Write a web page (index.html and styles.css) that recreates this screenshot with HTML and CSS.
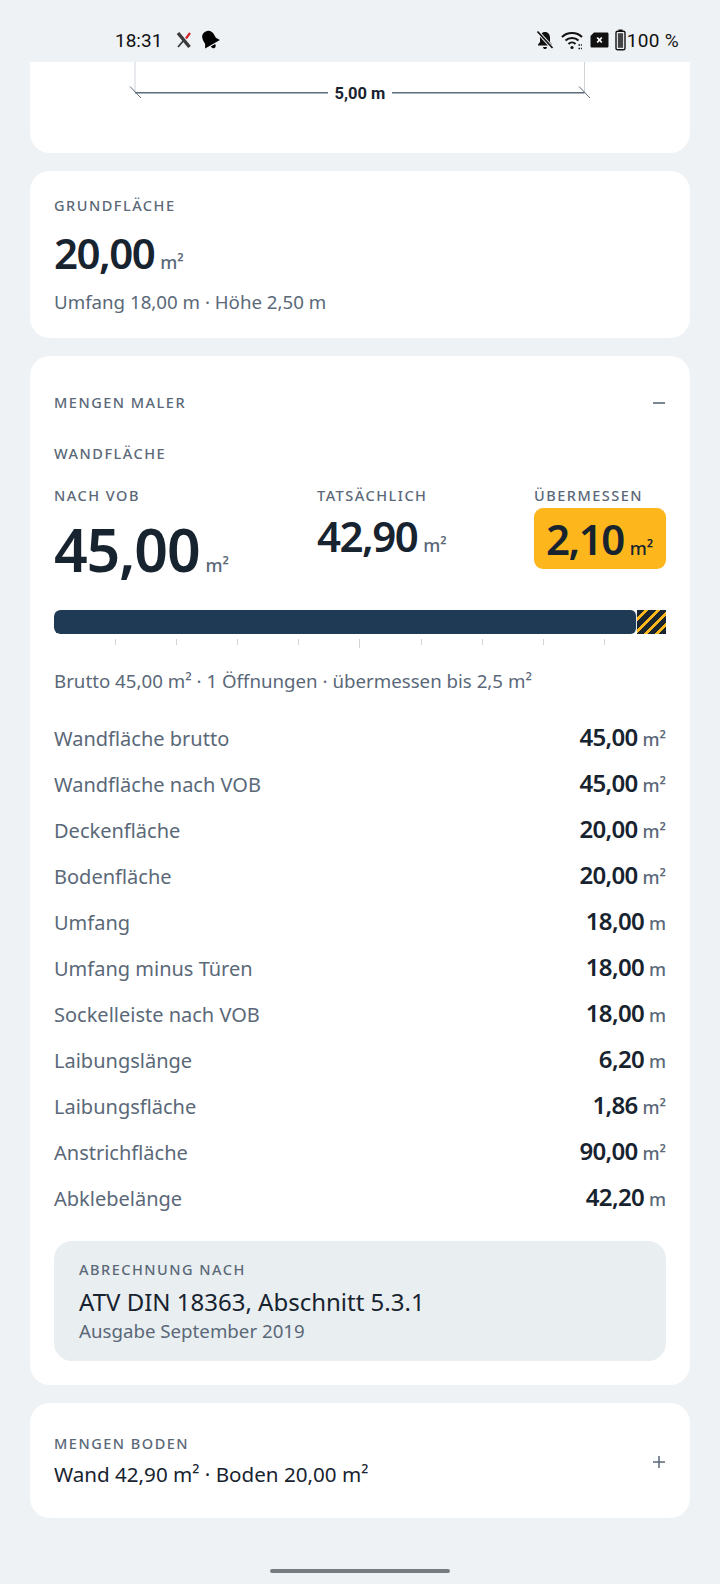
FILE: index.html
```html
<!DOCTYPE html>
<html lang="de">
<head>
  <meta charset="UTF-8">
  <title>Mengen</title>
  <link rel="stylesheet" href="styles.css">
</head>
<body>
  <div class="statusbar">
    <div class="status-left">
      <span class="time">18:31</span>
      <svg class="app-x" width="18" height="18" viewBox="0 0 18 18"><path d="M3 2 L14.5 16" stroke="#3a3a3a" stroke-width="3.4" fill="none"/><path d="M9 9 L3 16" stroke="#3a3a3a" stroke-width="1.8" fill="none"/><path d="M11 7.5 L15 2" stroke="#d2222a" stroke-width="2.2" fill="none"/></svg>
      <svg class="app-bell" width="20" height="20" viewBox="0 0 20 20"><g transform="rotate(-30 10 10)"><path d="M10 0.5 C5.5 0.5 3.8 4 3.8 7.5 V11 L1.5 15 H18.5 L16.2 11 V7.5 C16.2 4 14.5 0.5 10 0.5 Z" fill="#000"/><path d="M7.5 16 H12.5 C12.5 18 11.3 19.2 10 19.2 C8.7 19.2 7.5 18 7.5 16 Z" fill="#000"/></g></svg>
    </div>
    <div class="status-right">
      <svg class="icon-mute" width="18" height="20" viewBox="0 0 18 20"><path d="M9 2 C5.8 2 4 4.5 4 7.5 V12 L2 14.5 V15.5 H16 V14.5 L14 12 V7.5 C14 4.5 12.2 2 9 2 Z" fill="#111"/><path d="M7 17 H11 C11 18.4 10 19 9 19 C8 19 7 18.4 7 17 Z" fill="#111"/><path d="M1.5 1.5 L16.5 18" stroke="#eef2f5" stroke-width="3.4"/><path d="M1.5 1.5 L16.5 18" stroke="#111" stroke-width="1.7"/></svg>
      <svg width="23" height="20" viewBox="0 0 23 20" fill="none" stroke="#111" stroke-width="2"><path d="M1 7 C6 1.5 16 1.5 21 7"/><path d="M4.5 10.5 C8 7 14 7 17.5 10.5"/><path d="M7.5 14 C9.5 12 12.5 12 14.5 14"/><circle cx="11" cy="17.5" r="1.6" fill="#111" stroke="none"/><path d="M17.5 15 H21 M17.5 18.5 H21" stroke-width="1.6" stroke-dasharray="1.6 1"/></svg>
      <svg width="19" height="16" viewBox="0 0 19 16"><path d="M4 0.5 H17 C18 0.5 18.5 1 18.5 2 V14 C18.5 15 18 15.5 17 15.5 H2 C1 15.5 0.5 15 0.5 14 V4 Z" fill="#111"/><path d="M7.2 5.5 L11.8 10.5 M11.8 5.5 L7.2 10.5" stroke="#fff" stroke-width="1.8"/></svg>
      <svg width="11" height="22" viewBox="0 0 11 22"><rect x="3.5" y="0.5" width="4" height="2" fill="#111"/><rect x="1" y="2.2" width="9" height="18.6" rx="1.6" fill="none" stroke="#111" stroke-width="1.4"/><rect x="2.9" y="4.2" width="5.2" height="14.6" fill="#444"/></svg>
      <span class="battery-text">100 %</span>
    </div>
  </div>

  <main class="content">
    <section class="card card-plan">
      <svg class="plan" width="660" height="91" viewBox="0 0 660 91">
        <path d="M105 0 V31 M554.5 0 V31" stroke="#cfd4d9" stroke-width="1"/>
        <path d="M105 30.7 H298 M362 30.7 H554.5" stroke="#5d6b7b" stroke-width="1.6"/>
        <path d="M100 24.5 L111 36 M549 24.5 L560 36" stroke="#5d6b7b" stroke-width="1"/>
        <text x="330" y="37" text-anchor="middle" class="plan-label">5,00 m</text>
      </svg>
    </section>

    <section class="card card-base">
      <div class="label">GRUNDFLÄCHE</div>
      <div class="value-line base-value"><span class="num num-md">20,00</span><span class="unit">m²</span></div>
      <div class="note">Umfang 18,00 m · Höhe 2,50 m</div>
    </section>

    <section class="card card-maler">
      <div class="card-head">
        <div class="label">MENGEN MALER</div>
        <svg class="head-toggle" width="14" height="14" viewBox="0 0 14 14"><path d="M1 7 H13" stroke="#5a6878" stroke-width="1.6"/></svg>
      </div>
      <div class="label wall-title">WANDFLÄCHE</div>

      <div class="stats">
        <div>
          <div class="label">NACH VOB</div>
          <div class="value-line big-value"><span class="num num-lg">45,00</span><span class="unit">m²</span></div>
        </div>
        <div>
          <div class="label">TATSÄCHLICH</div>
          <div class="value-line mid-value"><span class="num num-md">42,90</span><span class="unit">m²</span></div>
        </div>
        <div>
          <div class="label">ÜBERMESSEN</div>
          <div class="value-line over-badge"><span class="num num-md">2,10</span><span class="unit">m²</span></div>
        </div>
      </div>

      <div class="bar">
        <div class="bar-fill"></div>
        <div class="bar-over"></div>
      </div>
      <div class="ticks">
        <i></i><i class="tick"></i><i class="tick"></i><i class="tick"></i><i class="tick"></i><i class="tick tick-mid"></i><i class="tick"></i><i class="tick"></i><i class="tick"></i><i class="tick"></i><i></i>
      </div>
      <div class="note bar-note">Brutto 45,00 m² · 1 Öffnungen · übermessen bis 2,5 m²</div>

      <div class="rows">
        <div class="row"><span>Wandfläche brutto</span><span class="row-val"><b>45,00</b><small>m²</small></span></div>
        <div class="row"><span>Wandfläche nach VOB</span><span class="row-val"><b>45,00</b><small>m²</small></span></div>
        <div class="row"><span>Deckenfläche</span><span class="row-val"><b>20,00</b><small>m²</small></span></div>
        <div class="row"><span>Bodenfläche</span><span class="row-val"><b>20,00</b><small>m²</small></span></div>
        <div class="row"><span>Umfang</span><span class="row-val"><b>18,00</b><small>m</small></span></div>
        <div class="row"><span>Umfang minus Türen</span><span class="row-val"><b>18,00</b><small>m</small></span></div>
        <div class="row"><span>Sockelleiste nach VOB</span><span class="row-val"><b>18,00</b><small>m</small></span></div>
        <div class="row"><span>Laibungslänge</span><span class="row-val"><b>6,20</b><small>m</small></span></div>
        <div class="row"><span>Laibungsfläche</span><span class="row-val"><b>1,86</b><small>m²</small></span></div>
        <div class="row"><span>Anstrichfläche</span><span class="row-val"><b>90,00</b><small>m²</small></span></div>
        <div class="row"><span>Abklebelänge</span><span class="row-val"><b>42,20</b><small>m</small></span></div>
      </div>

      <div class="norm">
        <div class="label">ABRECHNUNG NACH</div>
        <div class="norm-title">ATV DIN 18363, Abschnitt 5.3.1</div>
        <div class="norm-sub">Ausgabe September 2019</div>
      </div>
    </section>

    <section class="card card-floor">
      <div>
        <div class="label">MENGEN BODEN</div>
        <div class="floor-text">Wand 42,90 m² · Boden 20,00 m²</div>
      </div>
      <svg class="floor-toggle" width="14" height="14" viewBox="0 0 14 14"><path d="M1 7 H13 M7 1 V13" stroke="#5a6878" stroke-width="1.5"/></svg>
    </section>
  </main>

  <div class="home-bar"></div>
</body>
</html>
```

FILE: styles.css
```css
* { box-sizing: border-box; }
html, body { margin: 0; height: 1584px; overflow: hidden; }
body { background: #eef2f5; color: #17232f; font-family: "Noto Sans", sans-serif; display: flex; flex-direction: column; }

.statusbar { height: 62px; padding: 18px 41px 0 115px; display: flex; justify-content: space-between; align-items: center; font-family: Roboto, sans-serif; font-size: 19px; color: #111; }
.status-left, .status-right { display: flex; align-items: center; }
.status-left .app-x { margin-left: 13px; }
.status-left .app-bell { margin-left: 7px; }
.status-right { gap: 6px; }
.icon-mute { margin-right: 1px; }
.battery-text { margin-left: -5px; letter-spacing: 0.3px; }

.content { padding: 0 30px; display: flex; flex-direction: column; gap: 18px; }
.card { background: #fff; border-radius: 20px; }
.card-plan { height: 91px; border-radius: 0 0 20px 20px; }
.plan { display: block; }
.plan-label { font-family: Roboto, sans-serif; font-weight: 700; font-size: 16.5px; fill: #17232f; }

.label { font-size: 14.5px; line-height: 18px; letter-spacing: 1.5px; color: #5a6878; font-weight: 500; }
.note { font-size: 18.7px; line-height: 24px; color: #5a6878; }
.num { font-weight: 600; }
.num-lg { font-size: 59px; line-height: 66px; letter-spacing: -1.2px; }
.num-md { font-size: 42px; line-height: 48px; letter-spacing: -1.5px; }
.unit { font-size: 18px; font-weight: 500; color: #5a6878; margin-left: 6px; }
.value-line { display: flex; align-items: baseline; }

.card-base { height: 167px; padding: 25px 24px 0; }
.base-value { margin-top: 15px; }
.card-base .note { margin-top: 13px; }

.card-maler { height: 1029px; padding: 37px 24px 0; }
.card-head { display: flex; justify-content: space-between; align-items: center; }
.head-toggle { margin-top: 2px; }
.wall-title { margin-top: 33px; }

.stats { display: grid; grid-template-columns: 263px 217px 132px; margin-top: 24px; }
.big-value { margin-top: 12px; }
.mid-value { margin-top: 8px; }
.over-badge { margin-top: 4px; height: 61px; width: 132px; padding: 7px 0 0 12px; background: #fdb71c; border-radius: 9px; }
.over-badge .unit { color: #17232f; }

.bar { margin-top: 28px; height: 24px; display: flex; border-radius: 6px 0 0 6px; overflow: hidden; }
.bar-fill { width: 583px; background: #1f3a54; border-right: 1px solid #dfe5ea; border-radius: 6px; }
.bar-over { flex: 1; background: repeating-linear-gradient(-45deg, #1a2530 0 5px, #fdb71c 5px 8px); }
.ticks { height: 8px; margin-top: 5px; display: flex; justify-content: space-between; align-items: flex-start; }
.ticks i { width: 1px; height: 6px; }
.tick { background: #cfd4d9; }
.ticks .tick-mid { height: 9px; }
.bar-note { margin-top: 22px; }

.rows { margin-top: 22px; }
.row { height: 46px; display: flex; justify-content: space-between; align-items: center; font-size: 20px; color: #5a6878; }
.row-val { display: flex; align-items: baseline; padding-bottom: 3px; }
.row-val b { font-size: 24px; font-weight: 600; color: #17232f; letter-spacing: -0.7px; }
.row-val small { font-size: 18px; font-weight: 500; margin-left: 5px; }

.norm { margin-top: 20px; height: 120px; padding: 19px 25px 0; background: #e9eef1; border-radius: 18px; }
.norm-title { margin-top: 9px; font-size: 24px; line-height: 30px; color: #17232f; }
.norm-sub { margin-top: 2px; font-size: 18.7px; line-height: 24px; color: #5a6878; }

.card-floor { height: 115px; padding: 0 24px; display: flex; justify-content: space-between; align-items: center; }
.floor-text { margin-top: 8px; font-size: 20.6px; line-height: 28px; color: #17232f; }
.floor-toggle { margin-top: 2px; }

.home-bar { position: absolute; left: 270px; top: 1569px; width: 180px; height: 4px; border-radius: 2px; background: #777c80; }
```
